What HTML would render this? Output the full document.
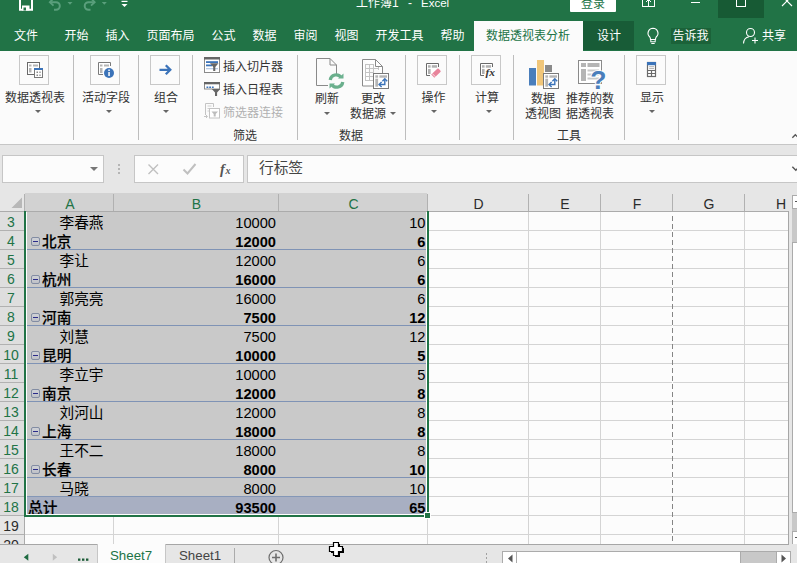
<!DOCTYPE html>
<html lang="zh-CN"><head><meta charset="utf-8"><title>Excel</title>
<style>
*{box-sizing:border-box;margin:0;padding:0}
html,body{width:797px;height:563px;overflow:hidden;background:#e6e6e6}
body{position:relative;font-family:"Liberation Sans","Noto Sans CJK SC",sans-serif;font-size:12px;color:#333}
.a{position:absolute}
.t{position:absolute;white-space:nowrap;line-height:16px;height:16px;margin-top:1px}
.w{color:#fff}
.c{text-align:center}
.sep{position:absolute;top:55px;width:1px;height:85px;background:#bdbdbd}
.box{position:absolute;top:55px;width:30px;height:30px;border:1px solid #c8c8c8;background:#fbfbfb}
.arr{position:absolute;width:0;height:0;border-left:3px solid transparent;border-right:3px solid transparent;border-top:3px solid #666}
.cell{position:absolute;white-space:nowrap;height:19px;line-height:19px;margin-top:1.500px;font-size:14.67px;color:#000}
.num{position:absolute;white-space:nowrap;height:19px;line-height:19px;margin-top:2px;font-size:14.670px;color:#000;text-align:right;font-family:"Liberation Sans",sans-serif}
.b{font-weight:bold}
.cell.b{font-weight:500;-webkit-text-stroke:0.150px #000}
.rh{position:absolute;left:0;width:22px;height:19px;line-height:20px;overflow:hidden;font-size:14px;text-align:center;color:#217346;font-family:"Liberation Sans",sans-serif}
.ch{position:absolute;top:193px;height:18px;line-height:22px;overflow:hidden;padding-left:2px;font-size:14px;text-align:center;font-family:"Liberation Sans",sans-serif}
.vl{position:absolute;width:1px;background:#d4d4d4}
.hl{position:absolute;height:1px;background:#d4d4d4}
</style></head>
<body>
<div class="a" style="left:0;top:0;width:797px;height:51px;background:#217346"></div>
<svg class="a" style="left:0;top:0" width="140" height="14" viewBox="0 0 140 14">
<path d="M20 -2 V9.700 H32 V-2" fill="none" stroke="#fff" stroke-width="2"/>
<rect x="22" y="5.500" width="7.500" height="5" fill="#fff"/><rect x="23.500" y="7.500" width="2.500" height="3" fill="#217346"/>
<path d="M50 2.200 H56 A3.800 3.800 0 0 1 56 9.800 H54" fill="none" stroke="#5a9f7c" stroke-width="2"/>
<path d="M53.500 -1.500 L49.800 2.200 L53.500 5.700" fill="none" stroke="#5a9f7c" stroke-width="1.800"/>
<path d="M67.500 2 h5 l-2.500 2.700z" fill="#5a9f7c"/>
<path d="M94.500 2.200 H88.500 A3.800 3.800 0 0 0 88.500 9.800 H90.500" fill="none" stroke="#5a9f7c" stroke-width="2"/>
<path d="M91 -1.500 L94.700 2.200 L91 5.700" fill="none" stroke="#5a9f7c" stroke-width="1.800"/>
<path d="M101.800 2 h5 l-2.500 2.700z" fill="#5a9f7c"/>
<rect x="121.500" y="0.800" width="6" height="1.200" fill="#fff"/>
<path d="M121.500 4 h6 l-3 3z" fill="#fff"/>
</svg>
<div class="t w" style="left:356px;top:-6.500px">工作簿1</div>
<div class="t w" style="left:408px;top:-6.500px">-</div>
<div class="t w" style="left:421px;top:-6.500px;font-size:11.500px">Excel</div>
<div class="a" style="left:570px;top:-6px;width:46px;height:18px;background:#fff;border-radius:1px"></div>
<div class="t" style="left:581px;top:-5px;color:#217346">登录</div>
<div class="a" style="left:718px;top:0;width:46px;height:18px;background:#175a34"></div>
<svg class="a" style="left:636px;top:0" width="161" height="12" viewBox="636 0 161 12">
<rect x="642.5" y="-3" width="12" height="9.500" fill="none" stroke="#fff" stroke-width="1"/>
<path d="M648.5 6 V0 M646 2 L648.5 -0.500 L651 2" fill="none" stroke="#fff" stroke-width="1"/>
<rect x="691" y="2" width="9" height="1" fill="#fff"/>
<rect x="736.500" y="-3" width="9" height="9.500" fill="none" stroke="#fff" stroke-width="1"/>
<path d="M782 -4 L792 6 M792 -4 L782 6" fill="none" stroke="#fff" stroke-width="1.1"/>
</svg>
<div class="t w" style="left:14px;top:27px">文件</div>
<div class="t w" style="left:64.5px;top:27px">开始</div>
<div class="t w" style="left:105.5px;top:27px">插入</div>
<div class="t w" style="left:146.5px;top:27px">页面布局</div>
<div class="t w" style="left:211.5px;top:27px">公式</div>
<div class="t w" style="left:252.5px;top:27px">数据</div>
<div class="t w" style="left:293.5px;top:27px">审阅</div>
<div class="t w" style="left:334.5px;top:27px">视图</div>
<div class="t w" style="left:375.5px;top:27px">开发工具</div>
<div class="t w" style="left:440.5px;top:27px">帮助</div>
<div class="a" style="left:474px;top:21px;width:109px;height:30px;background:#fbfbfb"></div>
<div class="t" style="left:486px;top:27px;color:#217346">数据透视表分析</div>
<div class="a" style="left:583px;top:21px;width:51px;height:29px;background:#185c37"></div>
<div class="t w" style="left:597px;top:27px">设计</div>
<svg class="a" style="left:644px;top:26px" width="18" height="20" viewBox="0 0 18 20">
<path d="M9 2.200 A5 5 0 0 0 5.800 11 Q6.500 12 6.500 13.500 H11.500 Q11.500 12 12.200 11 A5 5 0 0 0 9 2.200Z" fill="none" stroke="#fff" stroke-width="1.1"/>
<rect x="6.800" y="13.500" width="4.400" height="2.300" fill="none" stroke="#fff" stroke-width="1"/><path d="M7.300 17.500 H10.700" stroke="#fff" stroke-width="1"/>
</svg>
<div class="a" style="left:671px;top:28px;width:40px;height:16px;background:#1b6239"></div>
<div class="t w" style="left:672.500px;top:27px">告诉我</div>
<svg class="a" style="left:741px;top:26px" width="20" height="20" viewBox="0 0 20 20">
<circle cx="9.500" cy="6.500" r="4" fill="none" stroke="#fff" stroke-width="1.1"/>
<path d="M2.500 17.500 Q3 11.500 8 10.800" fill="none" stroke="#fff" stroke-width="1.1"/>
<path d="M11 14.500 H17 M14 11.500 V17.500" stroke="#fff" stroke-width="1.1"/>
</svg>
<div class="t w" style="left:762px;top:27px">共享</div>
<div class="a" style="left:0;top:51px;width:797px;height:94px;background:#fbfbfb;border-bottom:1px solid #c6c6c6"></div>
<div class="sep" style="left:73px"></div>
<div class="sep" style="left:138px"></div>
<div class="sep" style="left:192px"></div>
<div class="sep" style="left:297px"></div>
<div class="sep" style="left:405px"></div>
<div class="sep" style="left:459px"></div>
<div class="sep" style="left:513px"></div>
<div class="sep" style="left:624px"></div>
<div class="sep" style="left:678px"></div>
<div class="box" style="left:19px"></div>
<div class="t c" style="left:-5px;width:80px;top:89px">数据透视表</div>
<div class="arr" style="left:34.5px;top:110px"></div>
<div class="box" style="left:90px"></div>
<div class="t c" style="left:66px;width:80px;top:89px">活动字段</div>
<div class="arr" style="left:105.5px;top:110px"></div>
<div class="box" style="left:150px"></div>
<div class="t c" style="left:126px;width:80px;top:89px">组合</div>
<div class="arr" style="left:163px;top:110px"></div>
<div class="box" style="left:417px"></div>
<div class="t c" style="left:393.5px;width:80px;top:89px">操作</div>
<div class="arr" style="left:430.5px;top:110px"></div>
<div class="box" style="left:471px"></div>
<div class="t c" style="left:447px;width:80px;top:89px">计算</div>
<div class="arr" style="left:485.5px;top:110px"></div>
<div class="box" style="left:636px"></div>
<div class="t c" style="left:612px;width:80px;top:89px">显示</div>
<div class="arr" style="left:649px;top:110px"></div>
<svg class="a" style="left:19px;top:55px" width="30" height="30" viewBox="0 0 30 30">
<rect x="8.500" y="7.500" width="12" height="12" fill="#fff" stroke="#6a6a6a" stroke-width="1"/>
<rect x="10" y="9.500" width="2.500" height="2" fill="#b5b5b5"/><rect x="14" y="9.500" width="5" height="2" fill="#b5b5b5"/>
<rect x="10" y="13" width="2.500" height="4.500" fill="#b5b5b5"/>
<rect x="15.500" y="13.500" width="8" height="9" fill="#fff" stroke="#7a7a7a" stroke-width="1"/>
<rect x="15" y="13" width="9" height="2" fill="#3b73b9"/>
<rect x="17.500" y="16.500" width="1.500" height="1.500" fill="#8a8a8a"/><rect x="20" y="16.500" width="2" height="1.500" fill="#b5b5b5"/>
<rect x="17.500" y="19.500" width="1.500" height="1.500" fill="#8a8a8a"/><rect x="20" y="19.500" width="2" height="1.500" fill="#b5b5b5"/>
</svg>
<svg class="a" style="left:90px;top:55px" width="30" height="30" viewBox="0 0 30 30">
<path d="M8.500 19.500 V7.500 H20.500 V11" fill="#fff" stroke="#7a7a7a" stroke-width="1"/>
<path d="M8.500 19.500 H13" stroke="#7a7a7a" stroke-width="1"/>
<rect x="10" y="9.500" width="2.500" height="2" fill="#b5b5b5"/><rect x="14" y="9.500" width="5" height="2" fill="#b5b5b5"/>
<rect x="10" y="13" width="2.500" height="5" fill="#b5b5b5"/>
<circle cx="19" cy="18" r="5" fill="#3b73b9"/>
<rect x="18.300" y="17" width="1.500" height="4" fill="#fff"/><rect x="18.300" y="14.500" width="1.500" height="1.500" fill="#fff"/>
</svg>
<svg class="a" style="left:150px;top:55px" width="30" height="30" viewBox="0 0 30 30">
<path d="M9.500 14.800 H20 M15.800 10.300 L20.300 14.800 L15.800 19.300" fill="none" stroke="#3b73b9" stroke-width="2.300"/>
</svg>
<svg class="a" style="left:417px;top:55px" width="30" height="30" viewBox="0 0 30 30">
<path d="M13 20.500 H9.500 V8.500 H21.500 V12" fill="#fff" stroke="#6a6a6a" stroke-width="1"/>
<rect x="11" y="10.200" width="2.600" height="2.500" fill="#b0b0b0"/><rect x="14.800" y="10.200" width="5.300" height="2.500" fill="#b0b0b0"/>
<rect x="11" y="13.900" width="2.600" height="5.100" fill="#b0b0b0"/>
<path d="M14.200 19.500 L20.300 13.700 Q21 13.200 21.700 13.800 L23.500 15.700 Q24 16.400 23.400 17 L17.400 22.800 Z" fill="#e8849b"/><path d="M15.200 18.500 L18.400 21.800" stroke="#fbfbfb" stroke-width="0.800"/>
</svg>
<svg class="a" style="left:471px;top:55px" width="30" height="30" viewBox="0 0 30 30">
<path d="M13 20.500 H9.500 V8.500 H21.500 V12" fill="#fff" stroke="#6a6a6a" stroke-width="1"/>
<rect x="11" y="10.200" width="2.600" height="2.500" fill="#b0b0b0"/><rect x="14.800" y="10.200" width="5.300" height="2.500" fill="#b0b0b0"/>
<rect x="11" y="13.900" width="2.600" height="5.100" fill="#b0b0b0"/>
<text x="12" y="20.800" transform="scale(1.200,1)" font-family="Liberation Serif,serif" font-style="italic" font-weight="bold" font-size="9.500" fill="#333" stroke="#fbfbfb" stroke-width="1.200" paint-order="stroke">fx</text>
</svg>
<svg class="a" style="left:636px;top:55px" width="30" height="30" viewBox="0 0 30 30">
<rect x="11.500" y="7.500" width="8" height="14" fill="#fff" stroke="#6a6a6a" stroke-width="1.200"/>
<rect x="11" y="7" width="9" height="3.200" fill="#3b73b9"/>
<path d="M13.200 11.700 H18 M13.200 13.600 H18" stroke="#9a9a9a" stroke-width="0.800"/>
<path d="M11.500 15.500 H19.500 M11.500 18.500 H19.500 M15.500 15.500 V21.500" stroke="#6a6a6a" stroke-width="1.200"/>
</svg>
<div class="t" style="left:223px;top:57.5px;color:#333">插入切片器</div>
<div class="t" style="left:223px;top:80.5px;color:#333">插入日程表</div>
<div class="t" style="left:223px;top:103.5px;color:#b1b1b1">筛选器连接</div>
<svg class="a" style="left:203px;top:56px" width="20" height="66" viewBox="0 0 20 66">
<rect x="1.500" y="1.500" width="15" height="15" fill="#fff" stroke="#8a8a8a"/><rect x="1" y="1" width="16" height="2.500" fill="#666"/>
<rect x="3" y="5.200" width="12" height="1.800" fill="#3b73b9"/><rect x="3" y="8.500" width="6" height="1.800" fill="#3b73b9"/><rect x="3" y="12" width="12" height="1.300" fill="#b8cbe4"/>
<path d="M7 7.300 h8.500 l-3.200 3.700 v4 h-2.100 v-4z" fill="#666"/>
<rect x="1.500" y="27" width="15" height="6" fill="#fff" stroke="#8a8a8a"/><rect x="1" y="26" width="16" height="2.300" fill="#666"/>
<rect x="3.500" y="30.500" width="1.800" height="1.500" fill="#3b73b9"/><rect x="6.200" y="30.500" width="1.800" height="1.500" fill="#3b73b9"/><rect x="8.900" y="30.500" width="1.800" height="1.500" fill="#3b73b9"/>
<path d="M8.800 33 h8.500 l-3.200 3.500 v3.500 h-2.100 v-3.500z" fill="#666"/>
<path d="M2.500 59 V47.500 H10.500 V51" fill="none" stroke="#c4c4c4"/><path d="M4.500 50 h4 M4.500 52.500 h2 M4.500 55 h2" stroke="#d0d0d0"/>
<path d="M1 60.500 h3 M3 59 l1.500 1.500 l-1.500 1.500" fill="none" stroke="#c4c4c4"/>
<rect x="6.500" y="52.500" width="10" height="9.500" fill="#fff" stroke="#c4c4c4"/>
<path d="M8.500 55.500 h6.500 l-2.300 2.500 v2.500 h-2 v-2.500z" fill="#bdbdbd"/>
</svg>
<div class="t" style="left:233px;top:127px">筛选</div>
<svg class="a" style="left:312px;top:55px" width="36" height="36" viewBox="0 0 36 36">
<path d="M4.500 3.500 H18 L24.500 10 V19 M16 30.500 H4.500 V3.500" fill="none" stroke="#8a8a8a"/>
<path d="M18 3.500 V10 H24.500" fill="none" stroke="#8a8a8a"/>
<path d="M18.200 25 A6 6 0 0 1 29 22.300" fill="none" stroke="#6aaf8c" stroke-width="3.200"/>
<path d="M30.800 27 A6 6 0 0 1 20 29.700" fill="none" stroke="#6aaf8c" stroke-width="3.200"/>
<path d="M26 23.500 h5.500 v-5z" fill="#6db290"/><path d="M23 28.500 h-5.500 v5z" fill="#6db290"/>
</svg>
<div class="t" style="left:315px;top:90px">刷新</div>
<div class="arr" style="left:324px;top:112px"></div>
<svg class="a" style="left:360px;top:55px" width="32" height="36" viewBox="0 0 32 36">
<path d="M2.500 4.500 H15.500 L22.500 11.500 V19 M15 31 H2.500 V4.500" fill="#fff" stroke="#8a8a8a"/>
<path d="M15.500 4.500 V11.500 H22.500" fill="none" stroke="#8a8a8a"/>
<path d="M5.500 9.500 H14 M5.500 13.500 H18.500 M5.500 17.500 H14 M5.500 21.500 H14 M5.500 25.500 H14 M5.500 9 V26 M9.500 9 V26 M13.500 9 V26 M18.500 12 V15" stroke="#c4c4c4" fill="none"/>
<rect x="13.500" y="18.500" width="15" height="15" fill="#fff" stroke="#7a7a7a"/>
<rect x="15.300" y="20.300" width="2.800" height="2.400" fill="#b5b5b5"/><rect x="19.400" y="20.300" width="7.600" height="2.400" fill="#b5b5b5"/>
<rect x="15.300" y="23.700" width="2.800" height="8" fill="#b5b5b5"/>
<path d="M19.400 29.500 H24.800 V24.100" fill="none" stroke="#3b73b9" stroke-width="1.400"/><path d="M21.600 27.100 L19.100 29.500 L21.600 31.900" fill="none" stroke="#3b73b9" stroke-width="1.400"/><path d="M22.400 26.300 L24.800 23.800 L27.200 26.300" fill="none" stroke="#3b73b9" stroke-width="1.400"/>
</svg>
<div class="t" style="left:361px;top:90px">更改</div>
<div class="t" style="left:350px;top:105px">数据源</div>
<div class="arr" style="left:390px;top:112px"></div>
<div class="t" style="left:339px;top:127px">数据</div>
<svg class="a" style="left:526px;top:56px" width="36" height="34" viewBox="0 0 36 34">
<rect x="3" y="12" width="7" height="17.500" fill="#4a7ebb"/>
<rect x="11" y="4" width="7" height="25.500" fill="#f0c67a"/>
<rect x="19" y="9" width="7" height="7" fill="#8a8a8a"/>
<rect x="17.500" y="17.500" width="15" height="15" fill="#fff" stroke="#7a7a7a"/>
<rect x="19.300" y="19.300" width="2.800" height="2.400" fill="#b5b5b5"/><rect x="23.400" y="19.300" width="7.600" height="2.400" fill="#b5b5b5"/>
<rect x="19.300" y="22.700" width="2.800" height="8" fill="#b5b5b5"/>
<path d="M23.400 28.500 H28.800 V23.100" fill="none" stroke="#3b73b9" stroke-width="1.400"/><path d="M25.600 26.100 L23.100 28.500 L25.600 30.900" fill="none" stroke="#3b73b9" stroke-width="1.400"/><path d="M26.400 25.300 L28.800 22.800 L31.200 25.300" fill="none" stroke="#3b73b9" stroke-width="1.400"/>
</svg>
<div class="t" style="left:531px;top:90px">数据</div>
<div class="t" style="left:525px;top:105px">透视图</div>
<svg class="a" style="left:576px;top:56px" width="34" height="36" viewBox="0 0 34 36">
<rect x="2.500" y="4.500" width="23" height="23" fill="#fff" stroke="#8a8a8a"/>
<rect x="5" y="7" width="5" height="4" fill="#b5b5b5"/><rect x="11.500" y="7" width="12" height="4" fill="#b5b5b5"/>
<rect x="5" y="13" width="5" height="12" fill="#b5b5b5"/>
<path d="M11.500 14.500 H23 M11.500 18.500 H23 M11.500 22.500 H23" stroke="#c9c9c9" stroke-width="2"/>
<text x="14.300" y="32.800" font-family="Liberation Sans,sans-serif" font-weight="bold" font-size="26.500" fill="#4a7ebb" stroke="#fbfbfb" stroke-width="2" paint-order="stroke">?</text>
</svg>
<div class="t" style="left:566px;top:90px">推荐的数</div>
<div class="t" style="left:566px;top:105px">据透视表</div>
<div class="t" style="left:557px;top:127px">工具</div>
<svg class="a" style="left:791px;top:131px" width="6" height="10" viewBox="0 0 9 10"><path d="M2 7.500 L6.500 3 L11 7.500" fill="none" stroke="#555" stroke-width="2"/></svg>
<div class="a" style="left:2px;top:155px;width:102px;height:28px;background:#fcfcfc;border:1px solid #c6c6c6"></div>
<div class="arr" style="left:90px;top:167px;border-left-width:4px;border-right-width:4px;border-top-width:4px;border-top-color:#777"></div>
<div class="a" style="left:118px;top:164px;width:2px;height:2px;background:#b5b5b5"></div>
<div class="a" style="left:118px;top:168px;width:2px;height:2px;background:#b5b5b5"></div>
<div class="a" style="left:118px;top:172px;width:2px;height:2px;background:#b5b5b5"></div>
<div class="a" style="left:134px;top:155px;width:110px;height:28px;background:#fcfcfc;border:1px solid #c6c6c6"></div>
<svg class="a" style="left:134px;top:155px" width="110" height="28" viewBox="0 0 110 28">
<path d="M14.500 9.500 L24 19 M24 9.500 L14.500 19" stroke="#c0c0c0" stroke-width="1.400" fill="none"/>
<path d="M49.500 14.500 L53.500 18.500 L61.500 9" stroke="#c0c0c0" stroke-width="2" fill="none"/>
<text x="86" y="19" font-family="Liberation Serif,serif" font-style="italic" font-weight="bold" font-size="14.500" fill="#555">f</text>
<text x="91.500" y="19" font-family="Liberation Serif,serif" font-style="italic" font-weight="bold" font-size="10" fill="#555">x</text>
</svg>
<div class="a" style="left:247px;top:155px;width:560px;height:28px;background:#fcfcfc;border:1px solid #c6c6c6"></div>
<div class="t" style="left:259px;top:158px;font-size:14.670px;line-height:18px;height:18px;color:#444">行标签</div>
<svg class="a" style="left:790px;top:163px" width="7" height="12" viewBox="0 0 9 12"><path d="M3 3 L7.500 7.500 L12 3" fill="none" stroke="#555" stroke-width="1.800"/></svg>
<div class="a" style="left:0;top:211px;width:789px;height:333px;background:#fcfcfc"></div>
<div class="a" style="left:0;top:192px;width:789px;height:19px;background:#e6e6e6"></div>
<div class="a" style="left:25px;top:193px;width:402px;height:18px;background:#d2d2d2"></div>
<svg class="a" style="left:11px;top:197px" width="12" height="12" viewBox="0 0 12 12"><path d="M11 0.500 V11 H0.500Z" fill="#b8b8b8"/></svg>
<div class="ch" style="left:25px;width:88px;color:#217346">A</div>
<div class="ch" style="left:113px;width:165px;color:#217346">B</div>
<div class="ch" style="left:278px;width:149px;color:#217346">C</div>
<div class="ch" style="left:427px;width:101px;color:#2b2b2b">D</div>
<div class="ch" style="left:528px;width:72px;color:#2b2b2b">E</div>
<div class="ch" style="left:600px;width:72px;color:#2b2b2b">F</div>
<div class="ch" style="left:672px;width:72px;color:#2b2b2b">G</div>
<div class="ch" style="left:770px;width:20px;color:#2b2b2b">H</div>
<div class="vl" style="left:24px;top:194px;height:17px;background:#b1b1b1"></div>
<div class="vl" style="left:113px;top:194px;height:17px;background:#b1b1b1"></div>
<div class="vl" style="left:278px;top:194px;height:17px;background:#b1b1b1"></div>
<div class="vl" style="left:427px;top:194px;height:17px;background:#b1b1b1"></div>
<div class="vl" style="left:528px;top:194px;height:17px;background:#b1b1b1"></div>
<div class="vl" style="left:600px;top:194px;height:17px;background:#b1b1b1"></div>
<div class="vl" style="left:672px;top:194px;height:17px;background:#b1b1b1"></div>
<div class="vl" style="left:744px;top:194px;height:17px;background:#b1b1b1"></div>
<div class="hl" style="left:0;top:211px;width:789px;background:#ababab"></div>
<div class="a" style="left:0;top:212px;width:24px;height:19px;background:#dedede"></div>
<div class="rh" style="top:212px;color:#217346">3</div>
<div class="hl" style="left:0;top:230px;width:24px;background:#b1b1b1"></div>
<div class="a" style="left:0;top:231px;width:24px;height:19px;background:#dedede"></div>
<div class="rh" style="top:231px;color:#217346">4</div>
<div class="hl" style="left:0;top:249px;width:24px;background:#b1b1b1"></div>
<div class="a" style="left:0;top:250px;width:24px;height:19px;background:#dedede"></div>
<div class="rh" style="top:250px;color:#217346">5</div>
<div class="hl" style="left:0;top:268px;width:24px;background:#b1b1b1"></div>
<div class="a" style="left:0;top:269px;width:24px;height:19px;background:#dedede"></div>
<div class="rh" style="top:269px;color:#217346">6</div>
<div class="hl" style="left:0;top:287px;width:24px;background:#b1b1b1"></div>
<div class="a" style="left:0;top:288px;width:24px;height:19px;background:#dedede"></div>
<div class="rh" style="top:288px;color:#217346">7</div>
<div class="hl" style="left:0;top:306px;width:24px;background:#b1b1b1"></div>
<div class="a" style="left:0;top:307px;width:24px;height:19px;background:#dedede"></div>
<div class="rh" style="top:307px;color:#217346">8</div>
<div class="hl" style="left:0;top:325px;width:24px;background:#b1b1b1"></div>
<div class="a" style="left:0;top:326px;width:24px;height:19px;background:#dedede"></div>
<div class="rh" style="top:326px;color:#217346">9</div>
<div class="hl" style="left:0;top:344px;width:24px;background:#b1b1b1"></div>
<div class="a" style="left:0;top:345px;width:24px;height:19px;background:#dedede"></div>
<div class="rh" style="top:345px;color:#217346">10</div>
<div class="hl" style="left:0;top:363px;width:24px;background:#b1b1b1"></div>
<div class="a" style="left:0;top:364px;width:24px;height:19px;background:#dedede"></div>
<div class="rh" style="top:364px;color:#217346">11</div>
<div class="hl" style="left:0;top:382px;width:24px;background:#b1b1b1"></div>
<div class="a" style="left:0;top:383px;width:24px;height:19px;background:#dedede"></div>
<div class="rh" style="top:383px;color:#217346">12</div>
<div class="hl" style="left:0;top:401px;width:24px;background:#b1b1b1"></div>
<div class="a" style="left:0;top:402px;width:24px;height:19px;background:#dedede"></div>
<div class="rh" style="top:402px;color:#217346">13</div>
<div class="hl" style="left:0;top:420px;width:24px;background:#b1b1b1"></div>
<div class="a" style="left:0;top:421px;width:24px;height:19px;background:#dedede"></div>
<div class="rh" style="top:421px;color:#217346">14</div>
<div class="hl" style="left:0;top:439px;width:24px;background:#b1b1b1"></div>
<div class="a" style="left:0;top:440px;width:24px;height:19px;background:#dedede"></div>
<div class="rh" style="top:440px;color:#217346">15</div>
<div class="hl" style="left:0;top:458px;width:24px;background:#b1b1b1"></div>
<div class="a" style="left:0;top:459px;width:24px;height:19px;background:#dedede"></div>
<div class="rh" style="top:459px;color:#217346">16</div>
<div class="hl" style="left:0;top:477px;width:24px;background:#b1b1b1"></div>
<div class="a" style="left:0;top:478px;width:24px;height:19px;background:#dedede"></div>
<div class="rh" style="top:478px;color:#217346">17</div>
<div class="hl" style="left:0;top:496px;width:24px;background:#b1b1b1"></div>
<div class="a" style="left:0;top:497px;width:24px;height:19px;background:#dedede"></div>
<div class="rh" style="top:497px;color:#217346">18</div>
<div class="hl" style="left:0;top:515px;width:24px;background:#b1b1b1"></div>
<div class="a" style="left:0;top:516px;width:24px;height:19px;background:#e6e6e6"></div>
<div class="rh" style="top:516px;color:#2b2b2b">19</div>
<div class="hl" style="left:0;top:534px;width:24px;background:#b1b1b1"></div>
<div class="a" style="left:0;top:535px;width:24px;height:19px;background:#e6e6e6"></div>
<div class="rh" style="top:535px;color:#2b2b2b">20</div>
<div class="hl" style="left:0;top:553px;width:24px;background:#b1b1b1"></div>
<div class="vl" style="left:24px;top:212px;height:332px;background:#ababab"></div>
<div class="vl" style="left:113px;top:212px;height:332px"></div>
<div class="vl" style="left:278px;top:212px;height:332px"></div>
<div class="vl" style="left:427px;top:212px;height:332px"></div>
<div class="vl" style="left:528px;top:212px;height:332px"></div>
<div class="vl" style="left:600px;top:212px;height:332px"></div>
<div class="vl" style="left:744px;top:212px;height:332px"></div>
<div class="hl" style="left:25px;top:230px;width:763px"></div>
<div class="hl" style="left:25px;top:249px;width:763px"></div>
<div class="hl" style="left:25px;top:268px;width:763px"></div>
<div class="hl" style="left:25px;top:287px;width:763px"></div>
<div class="hl" style="left:25px;top:306px;width:763px"></div>
<div class="hl" style="left:25px;top:325px;width:763px"></div>
<div class="hl" style="left:25px;top:344px;width:763px"></div>
<div class="hl" style="left:25px;top:363px;width:763px"></div>
<div class="hl" style="left:25px;top:382px;width:763px"></div>
<div class="hl" style="left:25px;top:401px;width:763px"></div>
<div class="hl" style="left:25px;top:420px;width:763px"></div>
<div class="hl" style="left:25px;top:439px;width:763px"></div>
<div class="hl" style="left:25px;top:458px;width:763px"></div>
<div class="hl" style="left:25px;top:477px;width:763px"></div>
<div class="hl" style="left:25px;top:496px;width:763px"></div>
<div class="hl" style="left:25px;top:515px;width:763px"></div>
<div class="hl" style="left:25px;top:534px;width:763px"></div>
<div class="hl" style="left:25px;top:553px;width:763px"></div>
<div class="a" style="left:672px;top:216px;width:1px;height:328px;background:repeating-linear-gradient(to bottom,#858585 0,#858585 5px,#fcfcfc 5px,#fcfcfc 8px)"></div>
<div class="a" style="left:27px;top:212px;width:399px;height:302px;background:#c9c9c9"></div>
<div class="a" style="left:27px;top:497px;width:399px;height:17px;background:#a8afc2"></div>
<div class="hl" style="left:27px;top:496px;width:399px;background:#8497b7"></div>
<div class="cell" style="left:59.5px;top:212px">李春燕</div>
<div class="num" style="left:180px;width:96px;top:212px">10000</div>
<div class="num" style="left:330px;width:95.500px;top:212px">10</div>
<div class="hl" style="left:27px;top:249px;width:399px;background:#7f93b5"></div>
<div class="a" style="left:31px;top:237px;width:9px;height:9px;border:1px solid #828ca3;border-radius:2px;background:linear-gradient(#cfd1d6,#bfc1c7)"></div>
<div class="a" style="left:33px;top:241px;width:5px;height:1px;background:#2b2b8a"></div>
<div class="cell b" style="left:42px;top:231px">北京</div>
<div class="num b" style="left:180px;width:96px;top:231px">12000</div>
<div class="num b" style="left:330px;width:95.500px;top:231px">6</div>
<div class="cell" style="left:59.5px;top:250px">李让</div>
<div class="num" style="left:180px;width:96px;top:250px">12000</div>
<div class="num" style="left:330px;width:95.500px;top:250px">6</div>
<div class="hl" style="left:27px;top:287px;width:399px;background:#7f93b5"></div>
<div class="a" style="left:31px;top:275px;width:9px;height:9px;border:1px solid #828ca3;border-radius:2px;background:linear-gradient(#cfd1d6,#bfc1c7)"></div>
<div class="a" style="left:33px;top:279px;width:5px;height:1px;background:#2b2b8a"></div>
<div class="cell b" style="left:42px;top:269px">杭州</div>
<div class="num b" style="left:180px;width:96px;top:269px">16000</div>
<div class="num b" style="left:330px;width:95.500px;top:269px">6</div>
<div class="cell" style="left:59.5px;top:288px">郭亮亮</div>
<div class="num" style="left:180px;width:96px;top:288px">16000</div>
<div class="num" style="left:330px;width:95.500px;top:288px">6</div>
<div class="hl" style="left:27px;top:325px;width:399px;background:#7f93b5"></div>
<div class="a" style="left:31px;top:313px;width:9px;height:9px;border:1px solid #828ca3;border-radius:2px;background:linear-gradient(#cfd1d6,#bfc1c7)"></div>
<div class="a" style="left:33px;top:317px;width:5px;height:1px;background:#2b2b8a"></div>
<div class="cell b" style="left:42px;top:307px">河南</div>
<div class="num b" style="left:180px;width:96px;top:307px">7500</div>
<div class="num b" style="left:330px;width:95.500px;top:307px">12</div>
<div class="cell" style="left:59.5px;top:326px">刘慧</div>
<div class="num" style="left:180px;width:96px;top:326px">7500</div>
<div class="num" style="left:330px;width:95.500px;top:326px">12</div>
<div class="hl" style="left:27px;top:363px;width:399px;background:#7f93b5"></div>
<div class="a" style="left:31px;top:351px;width:9px;height:9px;border:1px solid #828ca3;border-radius:2px;background:linear-gradient(#cfd1d6,#bfc1c7)"></div>
<div class="a" style="left:33px;top:355px;width:5px;height:1px;background:#2b2b8a"></div>
<div class="cell b" style="left:42px;top:345px">昆明</div>
<div class="num b" style="left:180px;width:96px;top:345px">10000</div>
<div class="num b" style="left:330px;width:95.500px;top:345px">5</div>
<div class="cell" style="left:59.5px;top:364px">李立宇</div>
<div class="num" style="left:180px;width:96px;top:364px">10000</div>
<div class="num" style="left:330px;width:95.500px;top:364px">5</div>
<div class="hl" style="left:27px;top:401px;width:399px;background:#7f93b5"></div>
<div class="a" style="left:31px;top:389px;width:9px;height:9px;border:1px solid #828ca3;border-radius:2px;background:linear-gradient(#cfd1d6,#bfc1c7)"></div>
<div class="a" style="left:33px;top:393px;width:5px;height:1px;background:#2b2b8a"></div>
<div class="cell b" style="left:42px;top:383px">南京</div>
<div class="num b" style="left:180px;width:96px;top:383px">12000</div>
<div class="num b" style="left:330px;width:95.500px;top:383px">8</div>
<div class="cell" style="left:59.5px;top:402px">刘河山</div>
<div class="num" style="left:180px;width:96px;top:402px">12000</div>
<div class="num" style="left:330px;width:95.500px;top:402px">8</div>
<div class="hl" style="left:27px;top:439px;width:399px;background:#7f93b5"></div>
<div class="a" style="left:31px;top:427px;width:9px;height:9px;border:1px solid #828ca3;border-radius:2px;background:linear-gradient(#cfd1d6,#bfc1c7)"></div>
<div class="a" style="left:33px;top:431px;width:5px;height:1px;background:#2b2b8a"></div>
<div class="cell b" style="left:42px;top:421px">上海</div>
<div class="num b" style="left:180px;width:96px;top:421px">18000</div>
<div class="num b" style="left:330px;width:95.500px;top:421px">8</div>
<div class="cell" style="left:59.5px;top:440px">王不二</div>
<div class="num" style="left:180px;width:96px;top:440px">18000</div>
<div class="num" style="left:330px;width:95.500px;top:440px">8</div>
<div class="hl" style="left:27px;top:477px;width:399px;background:#7f93b5"></div>
<div class="a" style="left:31px;top:465px;width:9px;height:9px;border:1px solid #828ca3;border-radius:2px;background:linear-gradient(#cfd1d6,#bfc1c7)"></div>
<div class="a" style="left:33px;top:469px;width:5px;height:1px;background:#2b2b8a"></div>
<div class="cell b" style="left:42px;top:459px">长春</div>
<div class="num b" style="left:180px;width:96px;top:459px">8000</div>
<div class="num b" style="left:330px;width:95.500px;top:459px">10</div>
<div class="cell" style="left:59.5px;top:478px">马晓</div>
<div class="num" style="left:180px;width:96px;top:478px">8000</div>
<div class="num" style="left:330px;width:95.500px;top:478px">10</div>
<div class="cell b" style="left:28px;top:497px">总计</div>
<div class="num b" style="left:180px;width:96px;top:497px">93500</div>
<div class="num b" style="left:330px;width:95.500px;top:497px">65</div>
<div class="a" style="left:26px;top:212px;width:1px;height:303px;background:#fff"></div>
<div class="a" style="left:426px;top:212px;width:1px;height:303px;background:#fff"></div>
<div class="a" style="left:26px;top:514px;width:401px;height:1px;background:#fff"></div>
<div class="a" style="left:24px;top:211px;width:2px;height:306px;background:#217346"></div>
<div class="a" style="left:427px;top:211px;width:2px;height:302px;background:#217346"></div>
<div class="a" style="left:24px;top:515px;width:402px;height:2px;background:#217346"></div>
<div class="a" style="left:425px;top:513px;width:5px;height:5px;background:#217346;border:1px solid #fff;box-sizing:content-box;margin:-1px"></div>
<div class="vl" style="left:788px;top:211px;height:334px;background:#a6a6a6"></div>
<div class="a" style="left:789px;top:193px;width:8px;height:352px;background:#e6e6e6"></div>
<div class="a" style="left:792px;top:209px;width:5px;height:322px;background:#c8c8c8"></div>
<div class="a" style="left:792px;top:195px;width:8px;height:14px;background:#fff;border:1px solid #ababab"></div>
<div class="a" style="left:792px;top:242px;width:8px;height:271px;background:#fff;border:1px solid #ababab"></div>
<div class="a" style="left:792px;top:531px;width:8px;height:14px;background:#fff;border:1px solid #ababab"></div>
<div class="a" style="left:795px;top:201px;width:2px;height:1px;background:#555"></div>
<div class="a" style="left:795px;top:537px;width:2px;height:1px;background:#555"></div>
<div class="a" style="left:0;top:544px;width:797px;height:19px;background:#e6e6e6"></div>
<div class="hl" style="left:0;top:544px;width:789px;background:#a6a6a6"></div>
<div class="a" style="left:97px;top:544px;width:69px;height:19px;background:#fcfcfc;border-left:1px solid #c6c6c6;border-right:1px solid #c6c6c6"></div>
<div class="t" style="left:110px;top:547px;font-size:13.300px;color:#217346;font-family:'Liberation Sans',sans-serif">Sheet7</div>
<div class="t" style="left:179px;top:547px;font-size:13.300px;color:#444;font-family:'Liberation Sans',sans-serif">Sheet1</div>
<div class="vl" style="left:234px;top:548px;height:15px;background:#ababab"></div>
<svg class="a" style="left:0;top:545px" width="300" height="18" viewBox="0 0 300 18">
<path d="M28.300 8.800 v7 l-4.500 -3.500z" fill="#1e6b41"/>
<path d="M52.800 8.800 v7 l4.300 -3.500z" fill="#c0c0c0"/>
<rect x="78" y="13.500" width="2.400" height="2.300" fill="#1d5c38"/><rect x="82" y="13.500" width="2.400" height="2.300" fill="#1d5c38"/><rect x="86" y="13.500" width="2.400" height="2.300" fill="#1d5c38"/>
<circle cx="276" cy="12.500" r="7" fill="none" stroke="#6e6e6e" stroke-width="1.200"/>
<path d="M272 12.500 h8 M276 8.500 v8" stroke="#6e6e6e" stroke-width="1.600"/>
</svg>
<div class="a" style="left:486px;top:553px;width:1px;height:2px;background:#a0a0a0"></div>
<div class="a" style="left:486px;top:557px;width:1px;height:2px;background:#a0a0a0"></div>
<div class="a" style="left:486px;top:561px;width:1px;height:2px;background:#a0a0a0"></div>
<div class="a" style="left:502px;top:551px;width:289px;height:14px;background:#c8c8c8;border:1px solid #ababab"></div>
<div class="a" style="left:502px;top:551px;width:15px;height:14px;background:#fff;border:1px solid #ababab"></div>
<div class="a" style="left:516px;top:551px;width:225px;height:14px;background:#fff;border:1px solid #ababab"></div>
<div class="a" style="left:776px;top:551px;width:15px;height:14px;background:#fff;border:1px solid #ababab"></div>
<svg class="a" style="left:502px;top:551px" width="290" height="12" viewBox="0 0 290 12">
<path d="M10.500 3.500 v8 l-4.500 -4z" fill="#555"/><path d="M279.500 3.500 v8 l4.500 -4z" fill="#555"/></svg>
<svg class="a" style="left:328px;top:541px" width="18" height="18" viewBox="0 0 18 18">
<path d="M6 2 H11 V6 H15 V11 H11 V15 H6 V11 H2 V6 H6Z" fill="#000" transform="translate(1,1)"/>
<path d="M5.500 1.500 H10.500 V5.500 H14.500 V10.500 H10.500 V14.500 H5.500 V10.500 H1.500 V5.500 H5.500Z" fill="#fff" stroke="#000" stroke-width="1.200"/>
</svg>
</body></html>
